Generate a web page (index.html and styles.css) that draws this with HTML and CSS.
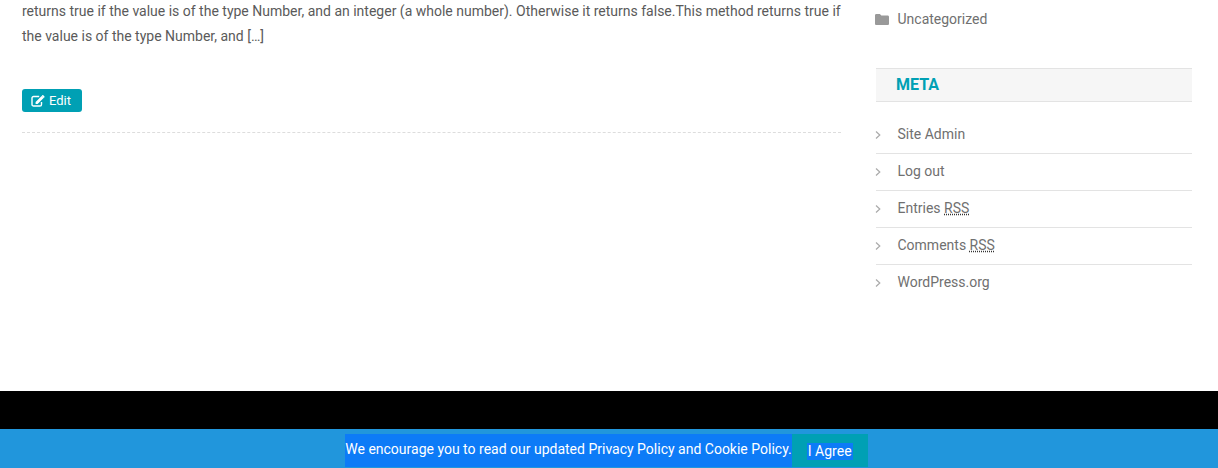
FILE: index.html
```html
<!DOCTYPE html>
<html lang="en">
<head>
<meta charset="utf-8">
<title>Blog</title>
<link rel="stylesheet" href="styles.css">
</head>
<body>
<div class="page">
  <div class="content">
    <main class="main">
      <p class="excerpt">returns true if the value is of the type Number, and an integer (a whole number). Otherwise it returns false.This method returns true if the value is of the type Number, and […]</p>
      <a class="edit" href="#">
        <svg class="edit-icon" viewBox="0 0 14 12" width="14" height="12" aria-hidden="true">
          <path class="edit-box" d="M10.500 7v2.400A1.600 1.600 0 0 1 8.900 11H2.600A1.600 1.600 0 0 1 1 9.400V3.100a1.600 1.600 0 0 1 1.600-1.600h5.600"/>
          <path class="edit-pen" d="M10.600.9l2 2-6 6H4.600v-2zM11.200.3a.8.8 0 0 1 1.100 0l1 1a.8.8 0 0 1 0 1.100l-.5.5-2-2z"/>
        </svg>
        <span>Edit</span>
      </a>
      <div class="divider"></div>
    </main>
    <aside class="sidebar">
      <div class="category">
        <svg class="folder" viewBox="0 0 14 11" width="14" height="11" aria-hidden="true"><path d="M1.300 0h3.600l1.400 1.600h6.400c.7 0 1.300.6 1.300 1.300v6.800c0 .7-.6 1.300-1.300 1.300H1.300C.6 11 0 10.400 0 9.700V1.300C0 .6.600 0 1.300 0z"/></svg>
        <a href="#">Uncategorized</a>
      </div>
      <h2 class="widget-title">META</h2>
      <ul class="meta-list">
        <li><svg class="chev" viewBox="0 0 6 10" width="6" height="10" aria-hidden="true"><path d="M1 1.500l3.800 3.500L1 8.500"/></svg><a href="#">Site Admin</a></li>
        <li><svg class="chev" viewBox="0 0 6 10" width="6" height="10" aria-hidden="true"><path d="M1 1.500l3.800 3.500L1 8.500"/></svg><a href="#">Log out</a></li>
        <li><svg class="chev" viewBox="0 0 6 10" width="6" height="10" aria-hidden="true"><path d="M1 1.500l3.800 3.500L1 8.500"/></svg><a href="#">Entries <abbr title="Really Simple Syndication">RSS</abbr></a></li>
        <li><svg class="chev" viewBox="0 0 6 10" width="6" height="10" aria-hidden="true"><path d="M1 1.500l3.800 3.500L1 8.500"/></svg><a href="#">Comments <abbr title="Really Simple Syndication">RSS</abbr></a></li>
        <li><svg class="chev" viewBox="0 0 6 10" width="6" height="10" aria-hidden="true"><path d="M1 1.500l3.800 3.500L1 8.500"/></svg><a href="#">WordPress.org</a></li>
      </ul>
    </aside>
  </div>
  <footer class="footer"></footer>
  <div class="cookie">
    <span class="cookie-text">We encourage you to read our updated Privacy Policy and Cookie Policy.</span>
    <button class="cookie-btn" type="button"><span>I Agree</span></button>
  </div>
</div>
</body>
</html>
```
FILE: styles.css
```css
* { box-sizing: border-box; }
html, body { margin: 0; height: 100%; overflow: hidden; background: #fff; }
body { font-family: Roboto, "Liberation Sans", sans-serif; font-size: 14px; color: #707070; }
a { color: inherit; text-decoration: none; }
.page { height: 468px; display: flex; flex-direction: column; overflow: hidden; }
.content { height: 391px; display: flex; padding-left: 22px; }
.main { width: 819px; }
.excerpt { margin: -1px 0 0; line-height: 25px; color: #5a5a5a; width: 819px; }
.edit { display: inline-flex; align-items: center; gap: 4px; margin-top: 40px; height: 23px; width: 60px; padding-left: 9px; background: #00a0b4; color: #fff; font-size: 13px; border-radius: 3px; vertical-align: top; }
.edit-icon { display: block; }
.edit-box { fill: none; stroke: #fff; stroke-width: 1.4; }
.edit-pen { fill: #fff; }
.divider { margin-top: 20px; border-top: 1px dashed #ddd; }
.sidebar { width: 316px; margin-left: 35px; }
.category { display: flex; align-items: center; gap: 8.5px; height: 20px; margin-top: 9px; }
.folder { fill: #999; flex: none; margin-top: 1px; margin-left: -1px; }
.widget-title { margin: 39px 0 0; height: 34px; line-height: 32px; padding-left: 20px; background: #f6f6f6; border-top: 1px solid #e3e3e3; border-bottom: 1px solid #e3e3e3; color: #00a0b4; font-size: 16px; font-weight: 700; }
.meta-list { list-style: none; margin: 15px 0 0; padding: 0; }
.meta-list li { display: flex; align-items: center; height: 37px; padding-bottom: 2px; border-bottom: 1px solid #e3e3e3; }
.meta-list li:last-child { border-bottom-color: transparent; }
.chev { flex: none; margin: 2px 16.5px 0 -1px; fill: none; stroke: #aaa; stroke-width: 1.2; }
abbr { text-decoration: underline dotted #333; }
.footer { height: 38px; background: #000; }
.cookie { height: 39px; background: #2196dc; display: flex; justify-content: center; align-items: flex-start; padding: 5px 5px 0 0; color: #fff; }
.cookie-text { height: 33px; line-height: 30px; background: #0d7bf7; white-space: nowrap; }
.cookie-btn { height: 33px; width: 76px; padding: 2px 0 0; border: 0; background: #00a0b4; color: #fff; font: inherit; }
.cookie-btn span { display: inline-block; line-height: 17px; padding: 0 1px; background: #0d7bf7; }
```
